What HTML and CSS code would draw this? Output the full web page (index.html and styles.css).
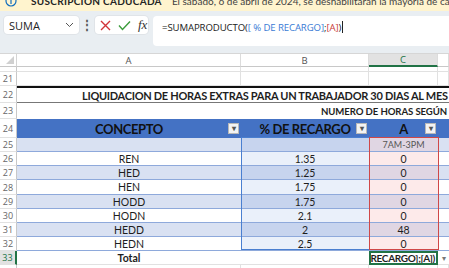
FILE: index.html
```html
<!DOCTYPE html>
<html lang="es">
<head>
    <meta charset="UTF-8">
    <title>Liquidacion de horas extras</title>
    <link rel="stylesheet" href="styles.css">
</head>
<body>
    <div class="banner">
        <div class="banner-line">
            <svg class="info" width="12" height="12" viewBox="0 0 12 12">
                <circle cx="6" cy="6" r="5" fill="none" stroke="#0f6cbd" stroke-width="1.2"/>
                <rect x="5.4" y="5" width="1.2" height="4" fill="#0f6cbd"/>
            </svg>
            <b>SUSCRIPCIÓN CADUCADA</b>
            <span class="banner-msg">El sábado, 6 de abril de 2024, se deshabilitarán la mayoría de características de Excel</span>
        </div>
    </div>

    <div class="fbar">
        <div class="namebox">
            <span>SUMA</span>
            <svg width="9" height="6" viewBox="0 0 9 6"><path d="M1 1 L4.5 4.5 L8 1" fill="none" stroke="#555" stroke-width="1"/></svg>
        </div>
        <div class="dots">⋮</div>
        <div class="fxbox">
            <svg width="11" height="11" viewBox="0 0 11 11"><path d="M1 1 L10 10 M10 1 L1 10" stroke="#d13438" stroke-width="1.4"/></svg>
            <svg width="13" height="11" viewBox="0 0 13 11"><path d="M1 5.5 L4.5 9.5 L12 1.5" fill="none" stroke="#3b9c3b" stroke-width="1.4"/></svg>
            <span class="fx">fx</span>
        </div>
        <div class="formula">=SUMAPRODUCTO(<span class="ref-b">[ % DE RECARGO]</span>;<span class="ref-c">[A]</span>)<span class="caret"></span></div>
    </div>

    <div class="sheet">
        <div class="row colhead">
            <div class="corner"><span class="tri"></span></div>
            <div class="ch">A</div>
            <div class="ch">B</div>
            <div class="ch ch-active">C</div>
            <div class="ch"></div>
        </div>

        <div class="row r20">
            <div class="rn"></div><div class="c"></div><div class="c"></div><div class="c"></div><div class="c"></div>
        </div>
        <div class="row r21">
            <div class="rn">21</div><div class="c"></div><div class="c"></div><div class="c"></div><div class="c"></div>
        </div>
        <div class="row r22">
            <div class="rn">22</div>
            <div class="c title">LIQUIDACION DE HORAS EXTRAS PARA UN TRABAJADOR 30 DIAS AL MES</div>
        </div>
        <div class="row r23">
            <div class="rn">23</div>
            <div class="c c-a"></div>
            <div class="c subtitle">NUMERO DE HORAS SEGÚN</div>
        </div>
        <div class="row r24">
            <div class="rn">24</div>
            <div class="c th">CONCEPTO<span class="dd">▾</span></div>
            <div class="c th">% DE RECARGO<span class="dd">▾</span></div>
            <div class="c th">A<span class="dd">▾</span></div>
            <div class="c th"></div>
        </div>

        <div class="row band">
            <div class="rn">25</div>
            <div class="c"></div><div class="c colb"></div><div class="c colc shift">7AM-3PM</div><div class="c"></div>
        </div>
        <div class="row plain">
            <div class="rn">26</div>
            <div class="c">REN</div><div class="c colb">1.35</div><div class="c colc">0</div><div class="c"></div>
        </div>
        <div class="row band">
            <div class="rn">27</div>
            <div class="c">HED</div><div class="c colb">1.25</div><div class="c colc">0</div><div class="c"></div>
        </div>
        <div class="row plain tall">
            <div class="rn">28</div>
            <div class="c">HEN</div><div class="c colb">1.75</div><div class="c colc">0</div><div class="c"></div>
        </div>
        <div class="row band">
            <div class="rn">29</div>
            <div class="c">HODD</div><div class="c colb">1.75</div><div class="c colc">0</div><div class="c"></div>
        </div>
        <div class="row plain">
            <div class="rn">30</div>
            <div class="c">HODN</div><div class="c colb">2.1</div><div class="c colc">0</div><div class="c"></div>
        </div>
        <div class="row band">
            <div class="rn">31</div>
            <div class="c">HEDD</div><div class="c colb">2</div><div class="c colc">48</div><div class="c"></div>
        </div>
        <div class="row plain">
            <div class="rn">32</div>
            <div class="c">HEDN</div><div class="c colb">2.5</div><div class="c colc">0</div><div class="c"></div>
        </div>
        <div class="row total">
            <div class="rn rn-active">33</div>
            <div class="c"><b>Total</b></div>
            <div class="c"></div>
            <div class="c editing">RECARGO];[A])</div>
            <div class="c drop-cell">▾</div>
        </div>
        <div class="row r34">
            <div class="rn"></div><div class="c"></div><div class="c"></div><div class="c"></div><div class="c"></div>
        </div>

        <div class="refbox refbox-b"></div>
        <div class="refbox refbox-c"></div>
    </div>
</body>
</html>
```

FILE: styles.css
```css
body {
    margin: 0;
    width: 449px;
    height: 268px;
    overflow: hidden;
    background-color: #e9eef2;
    font-family: "Open Sans", "Noto Sans", sans-serif;
}

.banner {
    height: 11px;
    overflow: hidden;
    background-color: #fff4ce;
}

.banner-line {
    display: flex;
    align-items: center;
    height: 16px;
    margin-top: -7px;
    padding-left: 5px;
    font-family: "Lato", sans-serif;
    font-size: 10px;
    color: #242424;
    white-space: nowrap;
}

.banner-line > * {
    flex: none;
}

.banner-line b {
    margin-left: 14px;
    letter-spacing: 0.3px;
}

.banner-msg {
    margin-left: 10px;
    color: #424242;
}

.fbar {
    display: flex;
    align-items: flex-start;
    height: 42px;
    padding: 5px 0 0 4px;
    box-sizing: border-box;
}

.namebox {
    display: flex;
    align-items: center;
    justify-content: space-between;
    width: 75px;
    height: 18px;
    padding: 0 5px;
    box-sizing: border-box;
    background-color: white;
    border-radius: 4px;
    box-shadow: 0 0 0 1px #e0e4e8;
    font-size: 11px;
    color: #222;
}

.dots {
    width: 16px;
    height: 18px;
    line-height: 18px;
    text-align: center;
    font-size: 12px;
    font-weight: bold;
    color: #555;
}

.fxbox {
    display: flex;
    align-items: center;
    gap: 7px;
    width: 53px;
    height: 18px;
    padding-left: 5px;
    box-sizing: border-box;
    background-color: white;
    border-radius: 4px;
    box-shadow: 0 0 0 1px #e0e4e8;
}

.fx {
    font-family: "Liberation Serif", serif;
    font-style: italic;
    font-size: 13px;
    color: #333;
}

.formula {
    flex: 1;
    height: 30px;
    margin-left: 5px;
    padding: 5px 0 0 9px;
    box-sizing: border-box;
    background-color: white;
    border-radius: 4px 0 0 4px;
    font-size: 9.6px;
    letter-spacing: -0.1px;
    color: #222;
    white-space: nowrap;
}

.ref-b {
    color: #3a7bd5;
}

.ref-c {
    color: #c93a3a;
}

.caret {
    display: inline-block;
    width: 1px;
    height: 12px;
    margin-left: 1px;
    vertical-align: -2px;
    background-color: #222;
}

/* sheet grid */
.sheet {
    position: relative;
    background-color: white;
    font-family: "Lato", "Liberation Sans", sans-serif;
    font-size: 10.5px;
    color: #1e1e1e;
}

.row {
    display: grid;
    grid-template-columns: 17px 224px 128px 69px 11px;
    height: 14px;
}

.row > div {
    box-sizing: border-box;
    overflow: hidden;
    white-space: nowrap;
    display: flex;
    align-items: center;
    justify-content: center;
}

.colhead {
    height: 13px;
    border-top: 1px solid #d6d6d6;
}

.corner {
    position: relative;
    border-right: 1px solid #d4d4d4;
    border-bottom: 1px solid #c8c8c8;
}

.tri {
    position: absolute;
    right: 2px;
    bottom: 2px;
    width: 0;
    height: 0;
    border-left: 8px solid transparent;
    border-bottom: 8px solid #d0d0d0;
}

.ch {
    font-family: "Open Sans", sans-serif;
    font-size: 9.5px;
    color: #555;
    border-right: 1px solid #dcdcdc;
    border-bottom: 1px solid #c8c8c8;
}

.ch-active {
    background-color: #e2e2e2;
    color: #217346;
    border-bottom: 2px solid #217346;
}

.rn {
    font-family: "Open Sans", sans-serif;
    font-size: 9px;
    color: #666;
    border-right: 1px solid #c8c8c8;
    border-bottom: 1px solid #e1e1e1;
}

.rn-active {
    background-color: #e2e2e2;
    color: #217346;
    border-right: 2px solid #217346 !important;
}

.c {
    border-right: 1px solid #e1e1e1;
    border-bottom: 1px solid #e1e1e1;
}

.r20 {
    height: 5px;
}

.r22 {
    height: 17px;
}

.r23 {
    height: 16px;
}

.r24 {
    height: 19px;
}

.title {
    grid-column: 2 / 6;
    justify-content: flex-start !important;
    padding-left: 65px;
    border-top: 2px solid #111;
    border-bottom: 1px solid #777 !important;
    border-right: none !important;
    font-weight: bold;
    font-size: 11px;
    letter-spacing: -0.3px;
}

.r23 .c-a {
    border-right: none;
    border-bottom: none;
}

.subtitle {
    grid-column: 3 / 6;
    justify-content: flex-end !important;
    padding-right: 2px;
    border: none !important;
    font-weight: bold;
    font-size: 9.6px;
    letter-spacing: -0.1px;
}

.th {
    position: relative;
    background-color: #4472c4;
    border: none !important;
    font-weight: bold;
    font-size: 13px;
    letter-spacing: -0.4px;
    color: #111;
}

.dd {
    position: absolute;
    right: 2px;
    top: 4px;
    width: 11px;
    height: 11px;
    box-sizing: border-box;
    border: 1px solid #b8b8b8;
    background-color: #f3f3f3;
    font-size: 8px;
    line-height: 9px;
    letter-spacing: 0;
    text-align: center;
    color: #555;
}

.band .c {
    background-color: #d9e1f2;
    border-right: none;
    border-bottom: 1px solid #8ea9db;
}

.plain .c {
    background-color: white;
    border-right: none;
    border-bottom: 1px solid #8ea9db;
}

.tall {
    height: 15px;
}

.band .colb {
    background-color: #c7d4ee;
}

.plain .colb {
    background-color: #eaf0fa;
}

.band .colc {
    background-color: #e0d6e3;
}

.plain .colc {
    background-color: #fdeaea;
}

.shift {
    font-size: 9px;
    color: #555;
}

.total .c {
    border-right: none;
    border-bottom: 1px solid #e1e1e1;
}

.total b {
    font-size: 10.5px;
}

.editing {
    justify-content: flex-end !important;
    padding-right: 1px;
    border: 2px solid #217346 !important;
    font-weight: bold;
    font-size: 10px;
    letter-spacing: -0.3px;
}

.drop-cell {
    font-size: 8px;
    color: #777;
}

.r34 {
    height: 4px;
}

/* formula reference highlights */
.refbox {
    position: absolute;
    top: 84px;
    height: 113px;
    box-sizing: border-box;
    pointer-events: none;
}

.refbox-b {
    left: 241px;
    width: 129px;
    border: 1px solid #4a7fd0;
}

.refbox-c {
    left: 369px;
    width: 70px;
    border: 1px solid #d04848;
}
```
